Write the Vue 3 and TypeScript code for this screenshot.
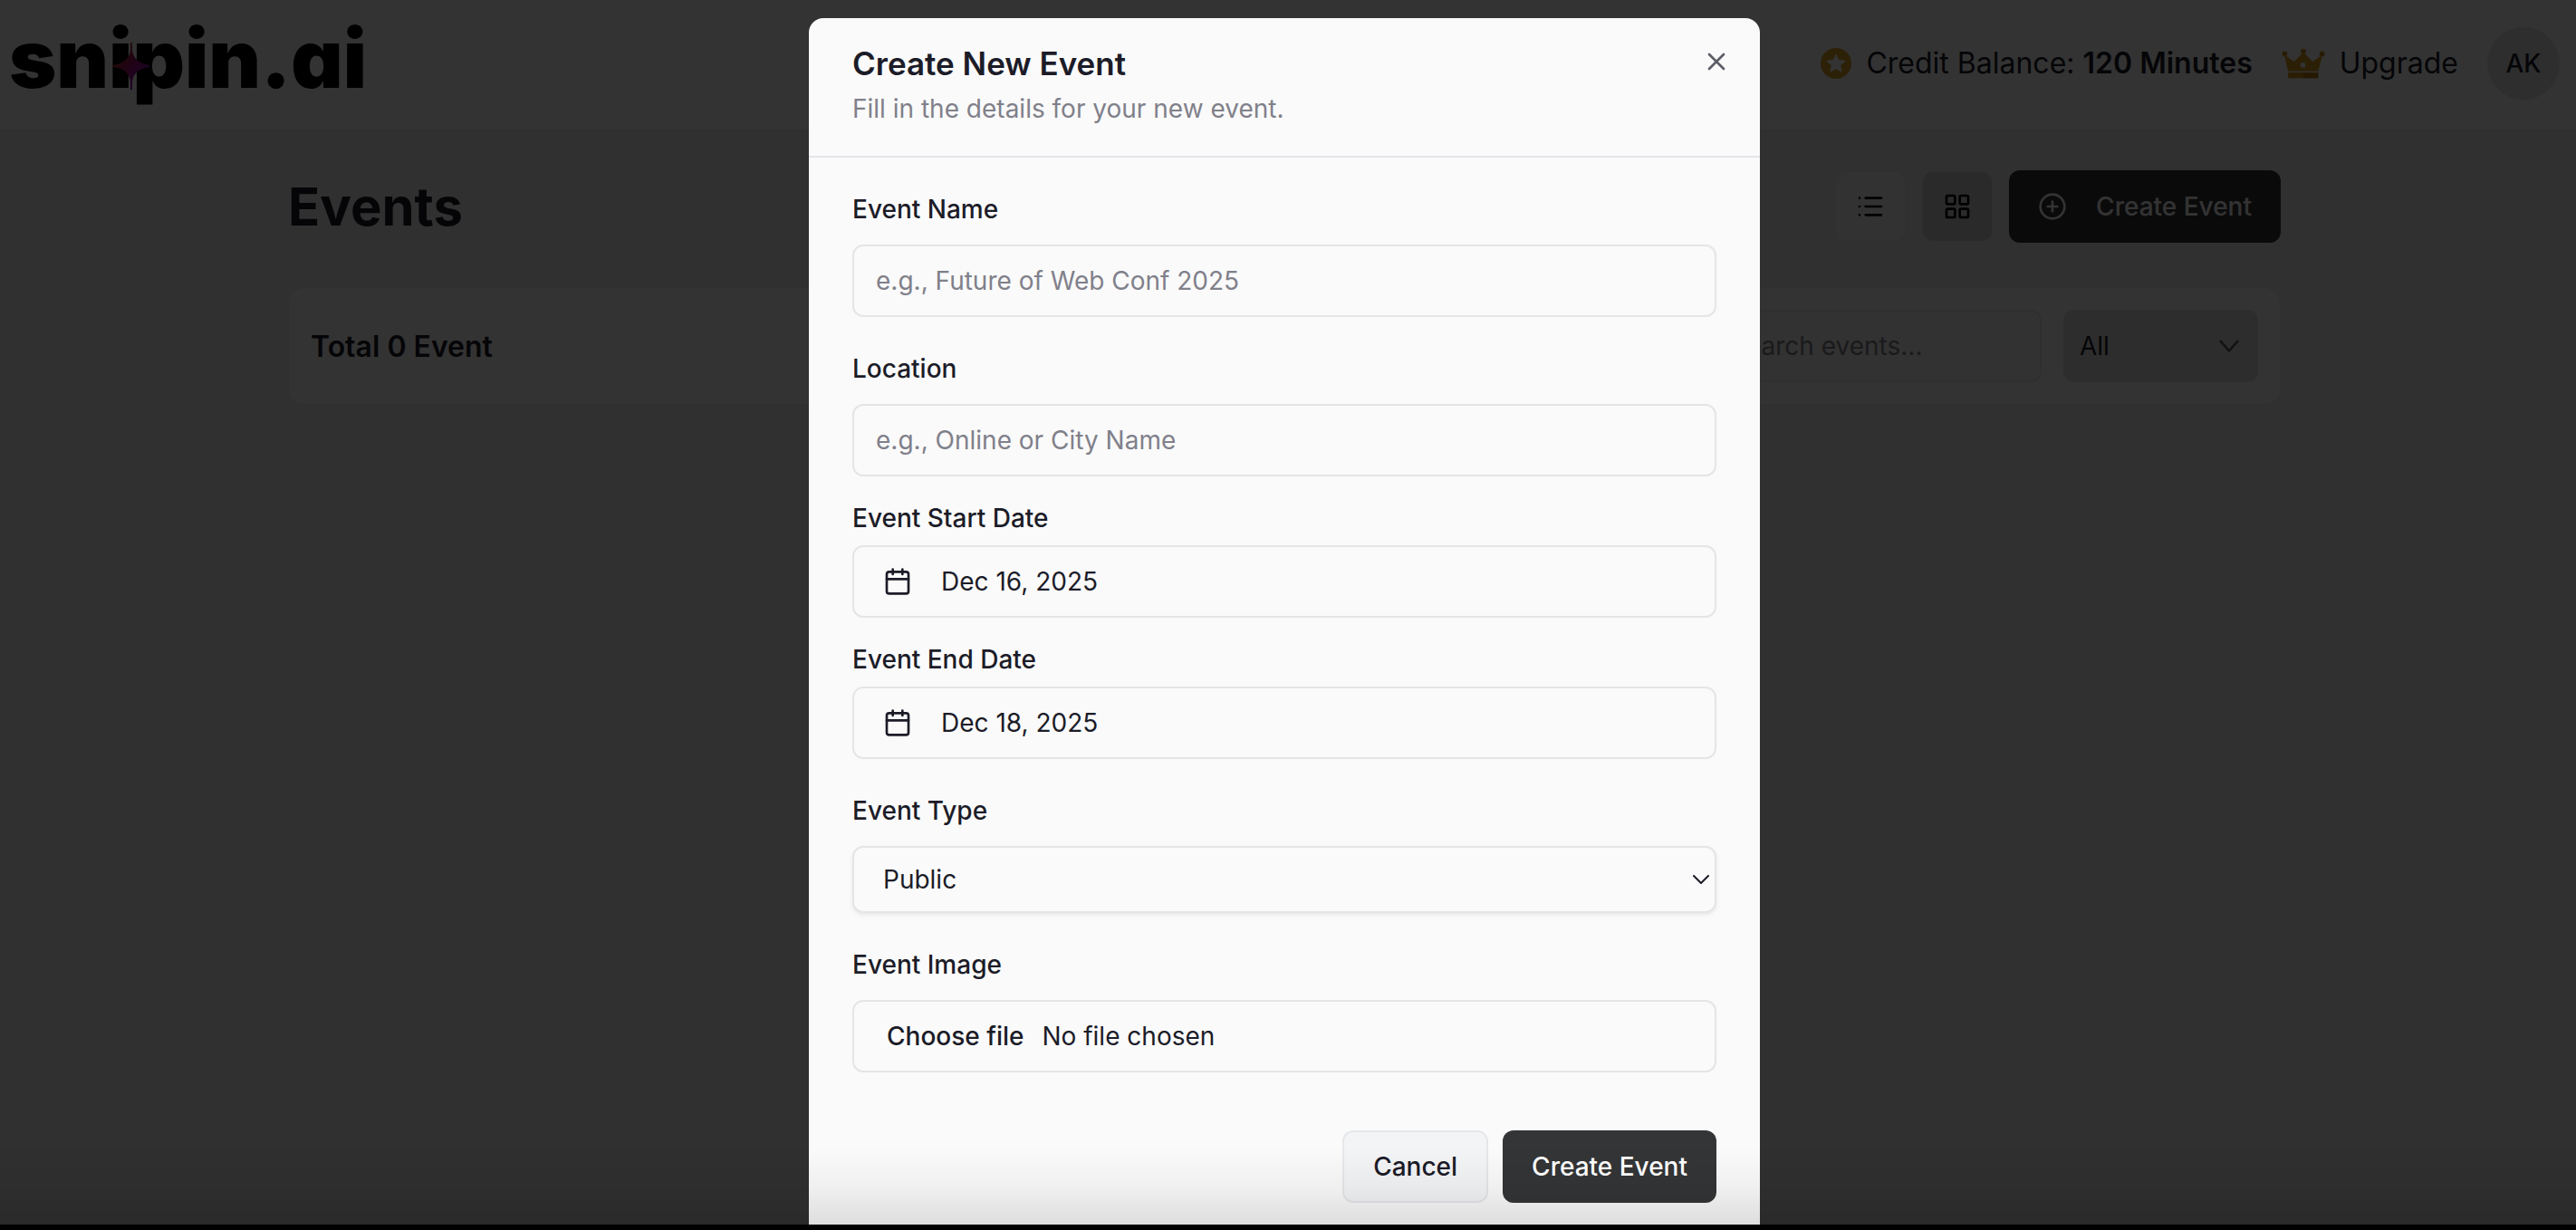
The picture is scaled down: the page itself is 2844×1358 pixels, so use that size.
<script setup lang="ts">
import { ref } from 'vue'

const search = ref('')
const filter = ref('All')
const eventName = ref('')
const location = ref('')
const eventType = ref('Public')
const fileName = ref('No file chosen')

const dates = [
  { id: 'start-date', label: 'Event Start Date', value: 'Dec 16, 2025' },
  { id: 'end-date', label: 'Event End Date', value: 'Dec 18, 2025' },
]

function onFile(e: Event) {
  const files = (e.target as HTMLInputElement).files
  fileName.value = files && files.length ? files[0].name : 'No file chosen'
}
</script>

<template>
  <div class="app">
    <header class="topbar">
      <a href="#" class="logo" aria-label="snipin.ai">
        <span>snipin.ai</span>
        <svg class="spark" viewBox="0 0 40 52" aria-hidden="true">
          <defs>
            <linearGradient id="sparkFill" x1="0" y1="0" x2="1" y2="1">
              <stop offset="0" stop-color="#c88a10" />
              <stop offset="0.4" stop-color="#a01450" />
              <stop offset="0.6" stop-color="#a01090" />
              <stop offset="1" stop-color="#4030e0" />
            </linearGradient>
          </defs>
          <path d="M19 0h2v9q2 13 19 16v2q-17 2-19 16v9h-2v-9q-2-14-19-16v-2q17-3 19-16z" fill="url(#sparkFill)" />
        </svg>
      </a>
      <div class="account">
        <div class="credit">
          <svg class="coin" viewBox="0 0 34 34" aria-hidden="true">
            <circle cx="17" cy="17" r="17" fill="#dca020" />
            <path d="M17 6l3.3 7 7.7 1-5.700 5.300 1.500 7.600L17 23.200 10.200 26.900l1.500-7.600L6 14l7.700-1z" fill="#fff" />
          </svg>
          <span>Credit Balance: <strong>120 Minutes</strong></span>
        </div>
        <a href="#" class="upgrade">
          <svg class="crown" viewBox="0 0 50 34" aria-hidden="true">
            <path d="M3 7l11.500 8L24 5h2l9.500 10L47 7 42 26H7.500z" fill="#d89c20" />
            <path d="M7.500 27.500H42V34H7.500z" fill="#d09018" />
            <path d="M25 27.500H42V34H25z" fill="#bc7c10" />
            <circle cx="3.500" cy="6" r="3" fill="#c88a18" />
            <circle cx="25" cy="3" r="3" fill="#c88a18" />
            <circle cx="46.500" cy="6" r="3" fill="#c88a18" />
            <circle cx="24.500" cy="19" r="3" fill="#fff" />
          </svg>
          <span>Upgrade</span>
        </a>
        <button type="button" class="avatar">AK</button>
      </div>
    </header>

    <main class="content">
      <div class="heading">
        <h1>Events</h1>
        <div class="actions">
          <button type="button" class="view" aria-label="List view">
            <svg viewBox="0 0 24 24"><path d="M3 5h.01M3 12h.01M3 19h.01M8 5h13M8 12h13M8 19h13" /></svg>
          </button>
          <button type="button" class="view active" aria-label="Grid view">
            <svg viewBox="0 0 24 24">
              <rect x="3" y="3" width="7" height="7" rx="1" /><rect x="14" y="3" width="7" height="7" rx="1" />
              <rect x="14" y="14" width="7" height="7" rx="1" /><rect x="3" y="14" width="7" height="7" rx="1" />
            </svg>
          </button>
          <button type="button" class="create">
            <svg viewBox="0 0 24 24"><circle cx="12" cy="12" r="10" /><path d="M8 12h8M12 8v8" /></svg>
            <span>Create Event</span>
          </button>
        </div>
      </div>

      <section class="toolbar">
        <h2>Total 0 Event</h2>
        <div class="filters">
          <input v-model="search" type="text" class="search" placeholder="Search events..." aria-label="Search events" />
          <div class="picker">
            <select v-model="filter" aria-label="Filter events">
              <option>All</option>
              <option>Public</option>
              <option>Private</option>
            </select>
            <svg viewBox="0 0 24 24" aria-hidden="true"><path d="M5 8l7 8 7-8" /></svg>
          </div>
        </div>
      </section>
    </main>

    <div class="overlay">
      <div class="modal" role="dialog" aria-modal="true" aria-labelledby="modal-title">
        <div class="modal-head">
          <div>
            <h2 id="modal-title">Create New Event</h2>
            <p>Fill in the details for your new event.</p>
          </div>
          <button type="button" class="close" aria-label="Close">
            <svg viewBox="0 0 24 24"><path d="M18 6L6 18M6 6l12 12" /></svg>
          </button>
        </div>

        <form class="modal-body" @submit.prevent>
          <div class="field">
            <label for="event-name">Event Name</label>
            <input id="event-name" v-model="eventName" class="control" type="text" placeholder="e.g., Future of Web Conf 2025" />
          </div>
          <div class="field">
            <label for="location">Location</label>
            <input id="location" v-model="location" class="control" type="text" placeholder="e.g., Online or City Name" />
          </div>
          <div v-for="d in dates" :key="d.id" class="field compact">
            <label :for="d.id">{{ d.label }}</label>
            <button :id="d.id" type="button" class="control date">
              <svg viewBox="0 0 24 24" aria-hidden="true">
                <path d="M8 2v4M16 2v4M3 10h18" /><rect x="3" y="4" width="18" height="18" rx="2" />
              </svg>
              <span>{{ d.value }}</span>
            </button>
          </div>
          <div class="field">
            <label for="event-type">Event Type</label>
            <div class="type">
              <select id="event-type" v-model="eventType" class="control">
                <option>Public</option>
                <option>Private</option>
              </select>
              <svg viewBox="0 0 18 10" aria-hidden="true"><path d="M1 1l8 8 8-8" /></svg>
            </div>
          </div>
          <div class="field">
            <label for="event-image">Event Image</label>
            <div class="control file">
              <span class="choose">Choose file</span>
              <span>{{ fileName }}</span>
              <input id="event-image" type="file" accept="image/*" @change="onFile" />
            </div>
          </div>
          <div class="buttons">
            <button type="button" class="cancel">Cancel</button>
            <button type="submit" class="submit">Create Event</button>
          </div>
        </form>
      </div>
    </div>

    <div class="edge"></div>
  </div>
</template>

<style>
body {
  margin: 0;
  background: #000;
}
</style>

<style scoped>
* {
  box-sizing: border-box;
}

.app {
  min-height: 100vh;
  background: #f1f1f1;
  color: #1c1c28;
  font-family: Inter, "Liberation Sans", sans-serif;
  font-size: 28px;
}

h1,
h2,
p {
  margin: 0;
}

button,
input,
select {
  font: inherit;
  color: inherit;
  margin: 0;
}

button {
  padding: 0;
  border: 0;
  cursor: pointer;
}

a {
  color: inherit;
  text-decoration: none;
}

svg {
  display: block;
  flex: none;
  fill: none;
  stroke-linecap: round;
  stroke-linejoin: round;
}

.topbar {
  display: flex;
  align-items: center;
  justify-content: space-between;
  height: 145px;
  padding: 0 18px 4px 10px;
  background: #fff;
  border-bottom: 2px solid #e5e5e5;
}

.logo {
  position: relative;
  padding-bottom: 10px;
  font-size: 89px;
  font-weight: 900;
  line-height: 112px;
  color: #000;
  font-feature-settings: "cv11";
}

.spark {
  position: absolute;
  left: 115px;
  top: 38px;
  width: 40px;
  height: 52px;
}

.account {
  display: flex;
  align-items: center;
  gap: 32px;
  font-size: 32px;
}

.credit,
.upgrade {
  display: flex;
  align-items: center;
  gap: 16px;
}

.credit strong {
  font-weight: 600;
}

.coin {
  width: 34px;
  height: 34px;
}

.crown {
  width: 48px;
  height: 34px;
}

.avatar {
  width: 80px;
  height: 80px;
  border-radius: 50%;
  background: #e4e4e4;
  font-size: 28px;
  font-weight: 500;
}

.content {
  max-width: 2200px;
  margin: 0 auto;
  padding-top: 43px;
  position: relative;
  right: 4px;
}

.heading {
  display: flex;
  align-items: center;
  justify-content: space-between;
}

.heading h1 {
  font-size: 58px;
  font-weight: 700;
  line-height: 80px;
}

.actions {
  display: flex;
  align-items: center;
  gap: 18px;
}

.view {
  display: flex;
  align-items: center;
  justify-content: center;
  width: 78px;
  height: 78px;
  border: 1px solid #ebebeb;
  border-radius: 12px;
  background: #fbfbfb;
}

.view.active {
  background: #d2d2d2;
}

.view svg {
  width: 32px;
  height: 32px;
  stroke: #000;
  stroke-width: 2;
}

.create {
  display: flex;
  align-items: center;
  gap: 32px;
  height: 80px;
  padding: 0 32px;
  border-radius: 12px;
  background: #343537;
  color: #fff;
}

.create svg {
  width: 32px;
  height: 32px;
  stroke: #fff;
  stroke-width: 2;
}

.create span {
  font-weight: 500;
}

.toolbar {
  display: flex;
  align-items: center;
  justify-content: space-between;
  margin-top: 49px;
  padding: 24px;
  border: 1px solid #e8e8e8;
  border-radius: 16px;
  background: #fcfcfc;
}

.toolbar h2 {
  font-size: 32px;
  font-weight: 600;
}

.filters {
  display: flex;
  gap: 24px;
}

.search {
  width: 400px;
  height: 80px;
  padding: 0 16px 0 54px;
  border: 2px solid #ececec;
  border-radius: 12px;
  background: #fbfbfb;
}

.search::placeholder {
  color: #80808a;
  opacity: 1;
}

.picker {
  position: relative;
  width: 215px;
}

.picker select {
  appearance: none;
  width: 100%;
  height: 80px;
  padding: 0 18px;
  border: 0;
  border-radius: 12px;
  background: #e2e2e2;
}

.picker svg {
  position: absolute;
  right: 16px;
  top: 24px;
  width: 32px;
  height: 32px;
  stroke: #606068;
  stroke-width: 2;
}

.overlay {
  position: fixed;
  inset: 0 0 6px;
  display: flex;
  align-items: flex-start;
  justify-content: center;
  padding: 20px 8px 0 0;
  background: rgba(0, 0, 0, 0.8);
}

.modal {
  width: 1050px;
  border-radius: 16px 16px 0 0;
  background: #fafafa;
}

.modal-head {
  display: flex;
  justify-content: space-between;
  padding: 32px;
  padding-left: 48px;
  border-bottom: 2px solid #e4e4ea;
}

.modal-head h2 {
  margin-bottom: 12px;
  font-size: 35px;
  font-weight: 600;
  line-height: 36px;
}

.modal-head p {
  line-height: 40px;
  color: #80808a;
}

.close {
  width: 32px;
  height: 32px;
  background: none;
}

.close svg {
  width: 32px;
  height: 32px;
  stroke: #5c5c66;
  stroke-width: 2;
}

.modal-body {
  display: flex;
  flex-direction: column;
  gap: 32px;
  padding: 32px 48px 24px;
}

.field {
  display: flex;
  flex-direction: column;
  gap: 16px;
}

.field label {
  padding: 11px 0 9px;
  font-weight: 500;
  line-height: 28px;
}

.field.compact label {
  padding: 0;
}

.control {
  width: 100%;
  height: 80px;
  padding: 0 24px;
  border: 2px solid #e5e5e5;
  border-radius: 12px;
  background: #fafafa;
}

.control::placeholder {
  color: #80808a;
  opacity: 1;
}

.date {
  display: flex;
  align-items: center;
  gap: 32px;
  padding: 0 32px;
}

.date svg {
  width: 32px;
  height: 32px;
  stroke: #1c1c28;
  stroke-width: 2;
}

.type {
  position: relative;
}

.type select {
  display: block;
  appearance: none;
  height: 74px;
  padding: 0 32px;
  box-shadow: 0 2px 4px rgba(0, 0, 0, 0.08);
}

.type svg {
  position: absolute;
  right: 8px;
  top: 32px;
  width: 18px;
  height: 10px;
  stroke: #1c1c28;
  stroke-width: 2;
}

.file {
  position: relative;
  display: flex;
  align-items: center;
  gap: 20px;
  padding: 0 36px;
}

.file input {
  position: absolute;
  inset: 0;
  width: 100%;
  opacity: 0;
}

.choose {
  font-weight: 500;
}

.buttons {
  display: flex;
  justify-content: flex-end;
  gap: 16px;
  margin-top: 32px;
}

.cancel,
.submit {
  height: 80px;
  padding: 0 32px;
  border-radius: 12px;
  font-weight: 500;
}

.cancel {
  border: 2px solid #e5e7ea;
  background: #f3f4f6;
}

.submit {
  background: #343537;
  color: #fff;
}

/* soft shade that gathers above the bottom edge of the window */
.edge {
  position: fixed;
  inset: auto 0 0;
  height: 90px;
  border-bottom: 6px solid #000;
  background: linear-gradient(rgba(0, 0, 0, 0), rgba(0, 0, 0, 0.04) 50%, rgba(0, 0, 0, 0.11));
  pointer-events: none;
}
</style>
